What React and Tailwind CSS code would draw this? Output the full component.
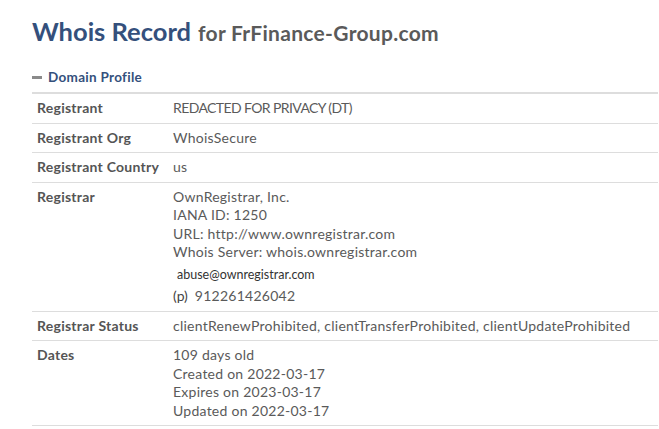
export default function App() {
  const rows = [
    { label: "Registrant", lines: ["REDACTED FOR PRIVACY (DT)"], tight: true },
    { label: "Registrant Org", lines: ["WhoisSecure"] },
    { label: "Registrant Country", lines: ["us"] },
    { label: "Registrar", registrar: true },
    {
      label: "Registrar Status",
      lines: ["clientRenewProhibited, clientTransferProhibited, clientUpdateProhibited"],
    },
    {
      label: "Dates",
      lines: ["109 days old", "Created on 2022-03-17", "Expires on 2023-03-17", "Updated on 2022-03-17"],
    },
  ];

  return (
    <div className="min-h-screen bg-white pl-[32px] pr-[1px] pt-[15px] font-['Lato',sans-serif] text-[#555]">
      <h1 className="leading-[32px] font-bold">
        <span className="text-[25.5px] text-[#34507c]">Whois Record</span>
        <span className="ml-[7px] text-[21px] tracking-[0.3px] text-[#5a5a5a]">for FrFinance-Group.com</span>
      </h1>

      {/* Domain Profile */}
      <div className="mt-[17px] flex items-center gap-[6px] pb-[6px] border-b-2 border-[#ddd]">
        <span className="block w-[10px] h-[3px] bg-[#8a8a8a]" />
        <span className="text-[13.5px] font-bold text-[#34507c] tracking-[0.3px] leading-[18px]">
          Domain Profile
        </span>
      </div>

      <div className="text-[14px] leading-[18.5px] tracking-[0.25px]">
        {rows.map((row) => (
          <div key={row.label} className="flex border-b border-[#ddd]">
            <div className="w-[136px] shrink-0 px-[5px] py-[5px] font-bold text-[#555]">
              {row.label}
            </div>
            <div
              className={
                row.tight
                  ? "flex-1 px-[5px] py-[5px] text-[#5a5a5a] tracking-[-0.6px]"
                  : "flex-1 px-[5px] py-[5px] text-[#5a5a5a]"
              }
            >
              {row.registrar ? (
                <>
                  <div>OwnRegistrar, Inc.</div>
                  <div>IANA ID: 1250</div>
                  <div>URL: http://www.ownregistrar.com</div>
                  <div>Whois Server: whois.ownregistrar.com</div>
                  <div className="pl-[4px] pt-[2px] text-[12.5px] leading-[21px] tracking-normal text-[#333]">
                    abuse@ownregistrar.com
                  </div>
                  <div className="leading-[21px]">
                    <span className="mr-[7px] text-[14px] tracking-normal text-[#444]">(p)</span>
                    912261426042
                  </div>
                </>
              ) : (
                row.lines.map((l) => <div key={l}>{l}</div>)
              )}
            </div>
          </div>
        ))}
      </div>
    </div>
  );
}
